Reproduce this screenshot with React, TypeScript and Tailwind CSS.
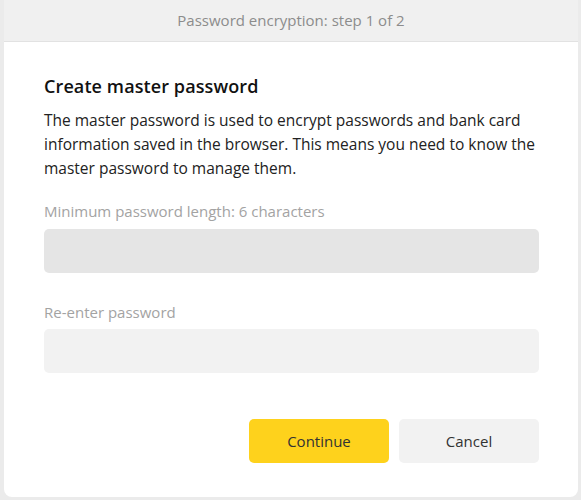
export default function App() {
  return (
    <div className="w-[581px] h-[500px] bg-[#ebebeb] pl-[4px] pr-[3px] pb-[3px]" style={{ fontFamily: '"Open Sans", "Noto Sans", sans-serif' }}>
      <div className="h-full bg-white rounded-b-[8px] flex flex-col overflow-hidden">
        <div className="h-[42px] shrink-0 bg-[#f0f0f0] border-b border-[#e2e2e2] flex items-center justify-center text-[15px] text-[#8c8c8c]">
          Password encryption: step 1 of 2
        </div>
        <div className="flex flex-col pl-[40px] pr-[39px] pt-[31px]">
          <h1 className="text-[18px] leading-[26px] font-semibold text-[#111] tracking-[0.1px]">Create master password</h1>
          <p className="mt-[9px] text-[15.5px] leading-[24px] text-[#222]">
            The master password is used to encrypt passwords and bank card information saved in the browser. This means you need to know the master password to manage them.
          </p>
          <label className="mt-[21px] text-[15px] leading-[20px] text-[#a3a3a3]">Minimum password length: 6 characters</label>
          <div className="mt-[8px] h-[44px] rounded-[5px] bg-[#e5e5e5]" />
          <label className="mt-[29px] text-[15px] leading-[20px] text-[#a3a3a3]">Re-enter password</label>
          <div className="mt-[7px] h-[44px] rounded-[5px] bg-[#f2f2f2]" />
          <div className="mt-[46px] flex justify-end gap-[10px]">
            <button className="w-[140px] h-[44px] rounded-[5px] bg-[#fed21c] text-[15px] text-[#333]">Continue</button>
            <button className="w-[140px] h-[44px] rounded-[5px] bg-[#f2f2f2] text-[15px] text-[#333]">Cancel</button>
          </div>
        </div>
      </div>
    </div>
  );
}
